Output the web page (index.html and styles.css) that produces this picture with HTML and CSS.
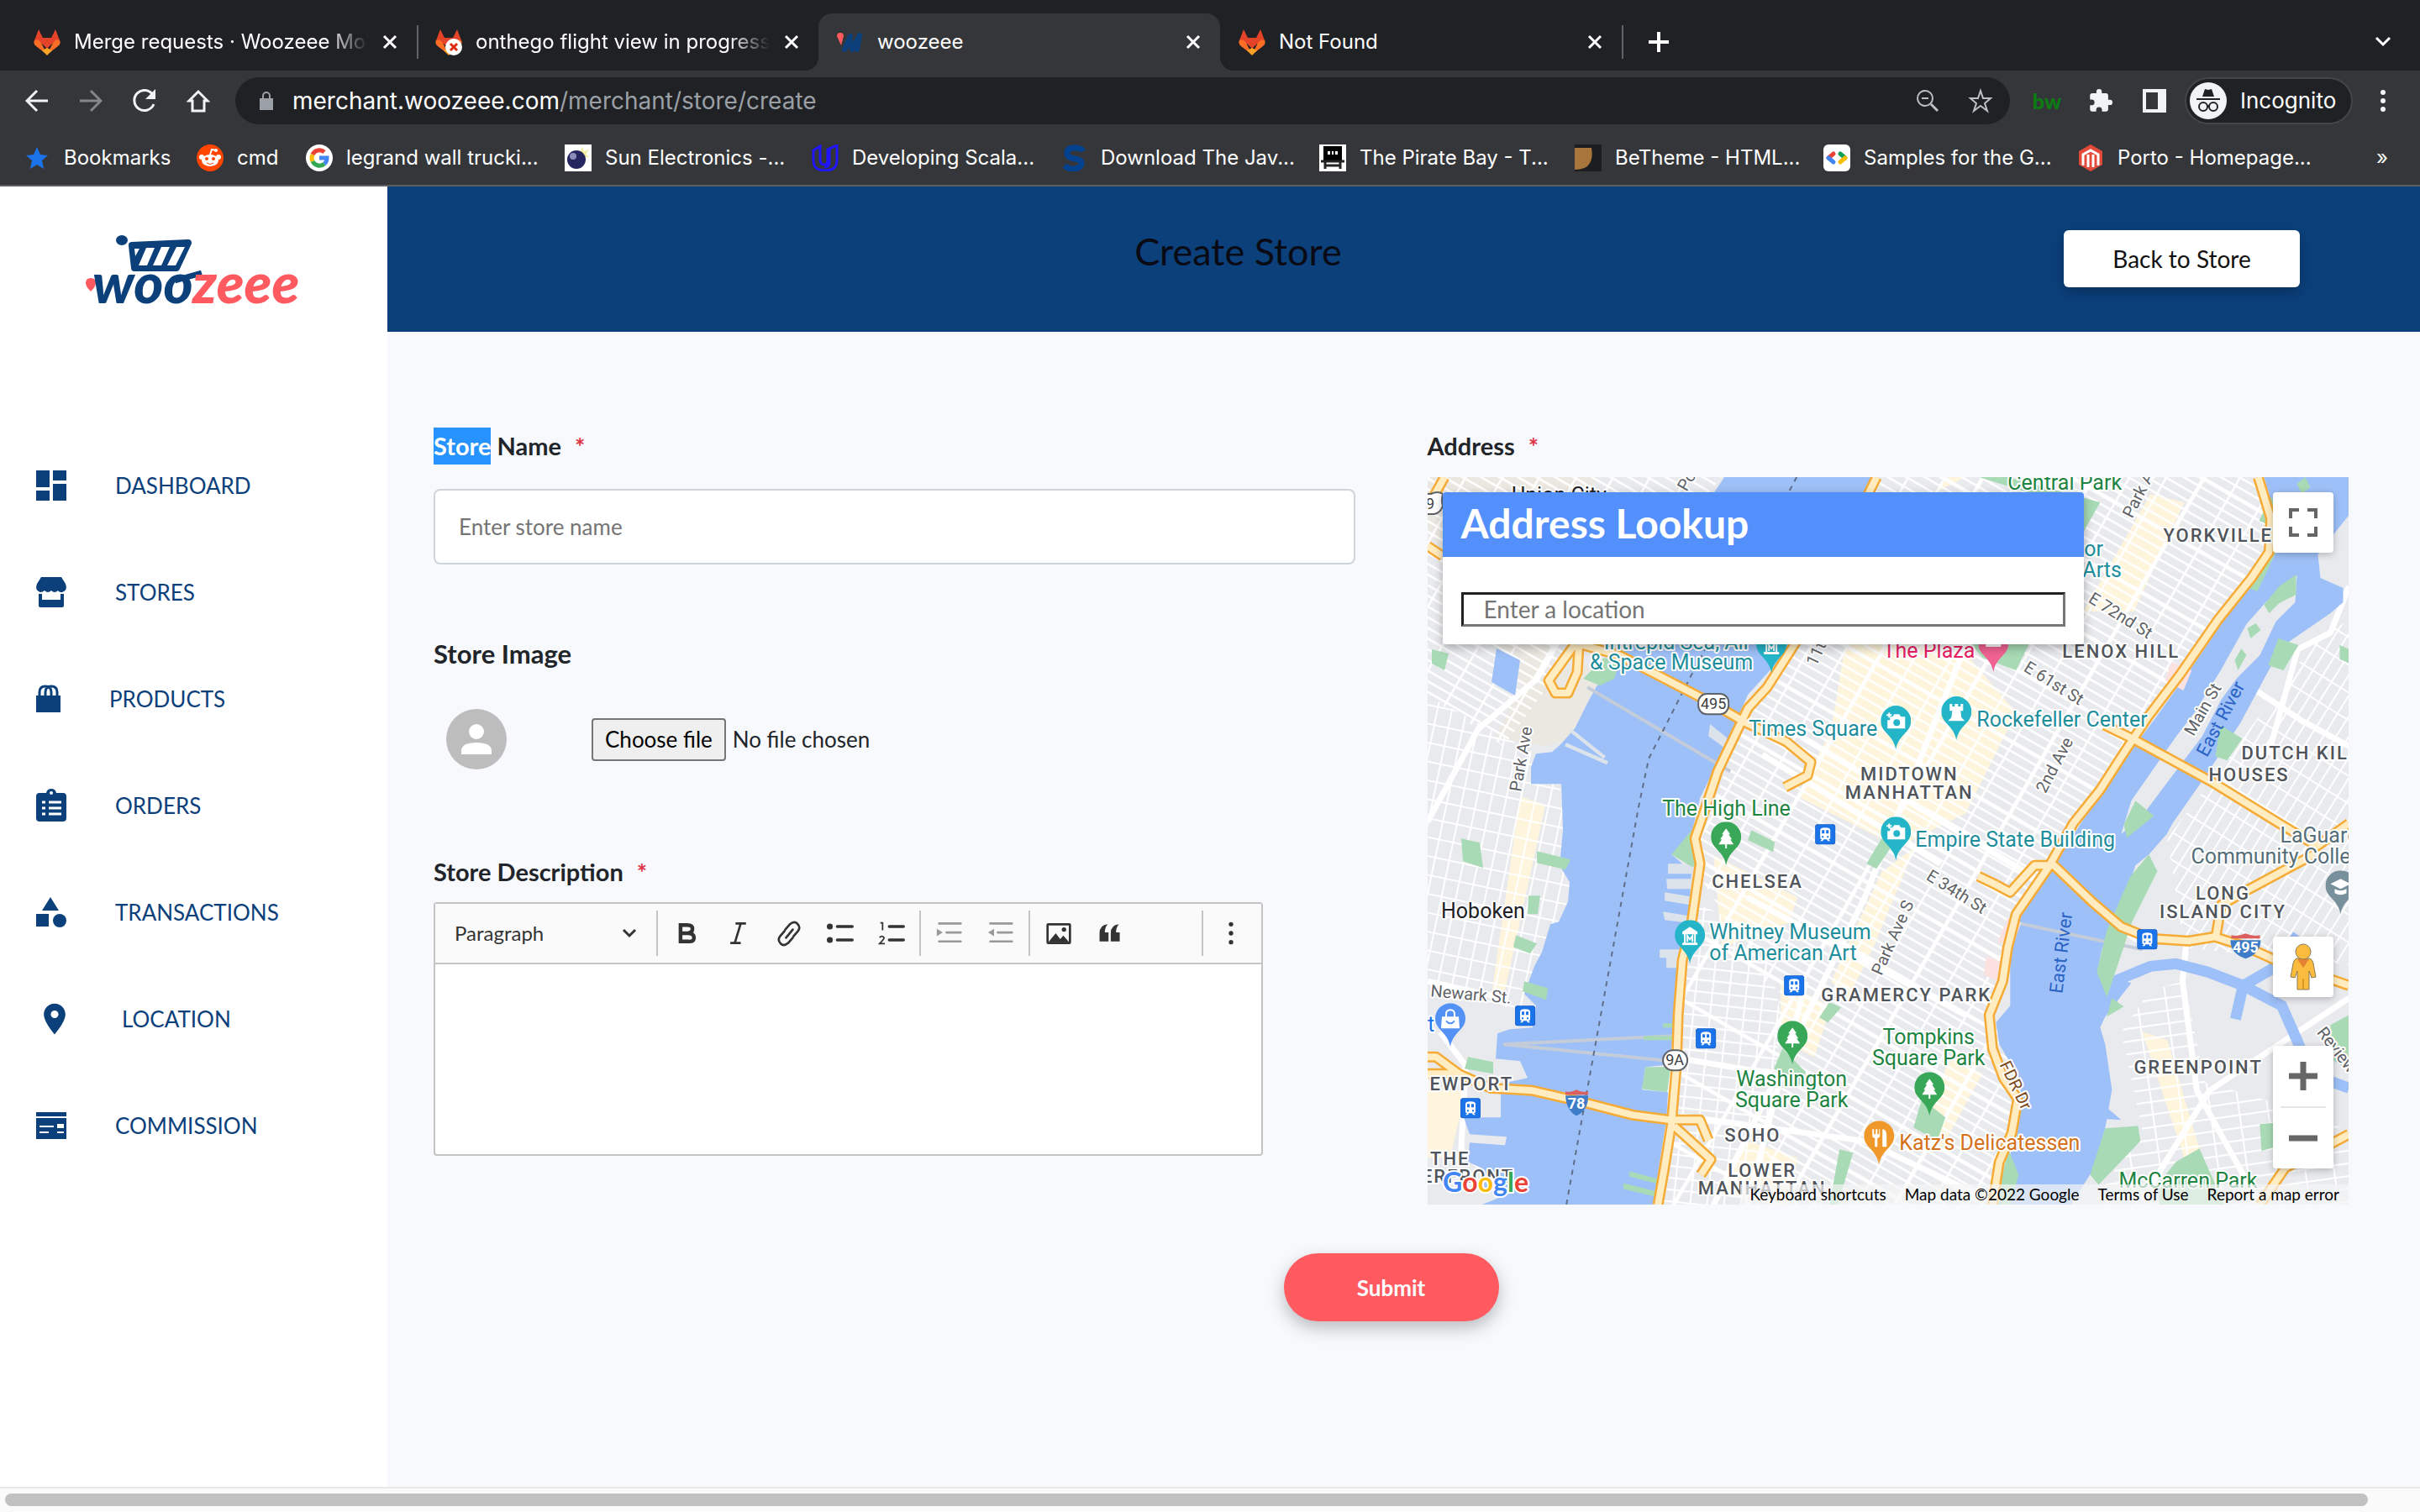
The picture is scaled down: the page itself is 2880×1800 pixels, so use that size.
FILE: index.html
```html
<!DOCTYPE html>
<html lang="en">
<head>
<meta charset="utf-8">
<title>woozeee</title>
<link rel="stylesheet" href="styles.css">
</head>
<body>
<svg class="defs" aria-hidden="true">
  <defs>
    <symbol id="fox" viewBox="0 0 32 32"><path fill="#e24329" d="M6 1 11 11H21L26 1l5 13-2 4H3l-2-4z"/><path fill="#fc6d26" d="M1 14l6-1 9 18L3 21Q-1 18 1 14zM31 14l-6-1-9 18 13-10q4-3 2-7z"/><path fill="#e24329" d="M5 13h22L16 24z"/><path fill="#fca326" d="m16 23 6 3-6 6-6-6z"/></symbol>
    <symbol id="close" viewBox="0 0 20 20"><path d="M3 3 17 17M17 3 3 17" stroke="#fff" stroke-width="3" fill="none"/></symbol>
    <symbol id="pin" viewBox="-18 -52 36 52"><path d="M0 0C-3-18-18-20-18-34a18 18 0 0 1 36 0C18-20 3-18 0 0z"/></symbol>
    <symbol id="train" viewBox="0 0 24 24"><rect width="24" height="24" rx="4" fill="#1a73e8" stroke="#185abc"/><path fill="#fff" d="M6 7q0-3 6-3t6 3v9q0 2-2 2l2 2h-3l-1-2h-4l-1 2H6l2-2q-2 0-2-2z"/><path fill="#1a73e8" d="M8 7h3v4H8zM13 7h3v4h-3zM8 14h2v2H8zM14 14h2v2h-2z"/></symbol>
    <symbol id="camera" viewBox="0 0 24 20"><path fill="#fff" d="M5 5h3l2-3h6l2 3h5v14H2V9h3zM3 0h2v2h2v2H5v2H3V4H1V2h2z"/><circle cx="13" cy="12" r="4" fill="#24b5c9"/></symbol>
    <symbol id="tree" viewBox="0 0 18 24"><path fill="#fff" d="m9 0 5 7h-2l4 6h-2l4 6h-8v5H8v-5H0l4-6H2l4-6H4z"/></symbol>
    <symbol id="museum" viewBox="0 0 20 22"><path fill="#fff" d="m10 0 9 6v3H1V6zM3 9h2v10H3zM15 9h2v10h-2zM1 19h18v3H1z"/><path fill="none" stroke="#fff" stroke-width="2" d="M7 18v-7l3 4 3-4v7"/></symbol>
    <g id="highways" fill="none" stroke-linejoin="round">
      <path d="M534 0 439 195 404 250 381 275 345 350 330 395 318 430 324 460 314 530 303 575 298 640 296 700 290 770 282 820 274 866"/>
      <path d="M182 199 228 212 340 270 378 292 427 315 456 339 452 355 425 369M175 199 144 242 152 257 167 257 178 232 180 200"/>
      <path d="M988 0 1003 49 1001 89 980 120 940 170 895 235 857 285 827 330 800 372 768 412 738 465 700 520 690 560 684 600 668 640 672 680 685 715 702 740 695 780 680 815 672 866"/>
      <path d="M805 295 840 312 932 362 1013 412 1058 439 1096 412"/>
      <path d="M1054 449 974 492 944 509 938 545M676 485 693 494 722 462 745 462 790 505 825 535 860 549 905 552 936 547 974 559 1009 575 1096 605M676 485 655 475"/>
      <path d="M0 690 10 690 37 710 75 727 125 730 190 745 244 759 290 765 324 765 334 789M293 772 337 812 325 830M0 710 37 710M990 866 1020 822 1096 782M20 0 0 36M0 82 18 94"/>
    </g>
    <pattern id="gridM" width="38" height="11" patternUnits="userSpaceOnUse" patternTransform="rotate(30)"><path d="M0 1H38M1 0V11" stroke="#fff" stroke-width="3" fill="none"/></pattern>
    <pattern id="gridWide" width="114" height="77" patternUnits="userSpaceOnUse" patternTransform="rotate(30)"><path d="M0 2H114M2 0V77" stroke="#fff" stroke-width="5" fill="none"/></pattern>
    <pattern id="gridH" width="17" height="22" patternUnits="userSpaceOnUse" patternTransform="rotate(12)"><path d="M0 1H17M1 0V22" stroke="#fff" stroke-width="2" fill="none"/></pattern>
    <pattern id="gridV" width="20" height="14" patternUnits="userSpaceOnUse" patternTransform="rotate(6)"><path d="M0 1H20M1 0V14" stroke="#fff" stroke-width="2" fill="none"/></pattern>
    <pattern id="gridQ" width="13" height="28" patternUnits="userSpaceOnUse" patternTransform="rotate(32)"><path d="M0 1H13M1 0V28" stroke="#fff" stroke-width="2" fill="none"/></pattern>
    <pattern id="gridG" width="34" height="15" patternUnits="userSpaceOnUse" patternTransform="rotate(-8)"><path d="M0 1H34M1 0V15" stroke="#fff" stroke-width="2" fill="none"/></pattern>
  </defs>
</svg>

<header class="chrome">
  <div class="tabs">
    <div class="tab"><svg class="fav"><use href="#fox"/></svg><span class="tab-title fade">Merge requests · Woozeee Mobile</span><button class="x" aria-label="Close tab"><svg width="20" height="20"><use href="#close"/></svg></button></div>
    <div class="tab line"><svg class="fav" viewBox="0 0 32 32"><use href="#fox" width="32" height="32"/><circle cx="22" cy="22" r="10" fill="#fff"/><path d="m18 18 8 8m0-8-8 8" stroke="#dd2b0e" stroke-width="3"/></svg><span class="tab-title fade">onthego flight view in progress</span><button class="x" aria-label="Close tab"><svg width="20" height="20"><use href="#close"/></svg></button></div>
    <div class="tab active"><svg class="fav" viewBox="0 0 32 32"><path d="M0 9q0-4 4-4t4 4L5 20z" fill="#ff5a5f"/><path d="M16 9 9 25l7-11 2 11 9-17-3 17" fill="none" stroke="#0b407b" stroke-width="6" stroke-linecap="round" stroke-linejoin="round"/></svg><span class="tab-title">woozeee</span><button class="x" aria-label="Close tab"><svg width="20" height="20"><use href="#close"/></svg></button></div>
    <div class="tab"><svg class="fav"><use href="#fox"/></svg><span class="tab-title">Not Found</span><button class="x" aria-label="Close tab"><svg width="20" height="20"><use href="#close"/></svg></button></div>
    <button class="new-tab line" aria-label="New tab"><svg width="24" height="24" viewBox="0 0 24 24"><path d="M12 0v24M0 12h24" stroke="#fff" stroke-width="4"/></svg></button>
    <button class="tab-menu" aria-label="Search tabs"><svg width="20" height="14" viewBox="0 0 20 14"><path d="m2 2 8 8 8-8" fill="none" stroke="#fff" stroke-width="3"/></svg></button>
  </div>
  <div class="toolbar">
    <button class="tool" aria-label="Back"><svg viewBox="0 0 28 28"><path d="M27 14H3M14 2 2 14l12 12" fill="none" stroke="#f1f3f4" stroke-width="3"/></svg></button>
    <button class="tool" aria-label="Forward"><svg viewBox="0 0 28 28"><path d="M1 14h24M14 2l12 12-12 12" fill="none" stroke="#85868a" stroke-width="3"/></svg></button>
    <button class="tool" aria-label="Reload"><svg viewBox="0 0 28 28"><path d="M24 7A12 12 0 1 0 25 18" fill="none" stroke="#f1f3f4" stroke-width="3"/><path d="M27 0v12H15z" fill="#f1f3f4"/></svg></button>
    <button class="tool" aria-label="Home"><svg viewBox="0 0 28 28"><path d="M14 3 3 14h4v12h14V14h4z" fill="none" stroke="#f1f3f4" stroke-width="3"/></svg></button>
    <div class="omnibox">
      <svg width="18" height="24" viewBox="0 0 18 24"><path d="M1 9h16v14H1z" fill="#9aa0a6"/><path d="M5 10V6a4 4 0 0 1 8 0v4" fill="none" stroke="#9aa0a6" stroke-width="2"/></svg>
      <span class="url">merchant.woozeee.com<span class="path">/merchant/store/create</span></span>
      <svg width="28" height="28" viewBox="0 0 28 28"><circle cx="11" cy="11" r="9" fill="none" stroke="#bdc1c6" stroke-width="2"/><path d="M7 11h8" stroke="#bdc1c6" stroke-width="2"/><path d="m18 18 8 8" stroke="#bdc1c6" stroke-width="3"/></svg>
      <svg class="star" width="30" height="30" viewBox="0 0 30 30"><path d="m15 3 3 9h9l-7 6 3 9-8-6-8 6 3-9-7-6h9z" fill="none" stroke="#bdc1c6" stroke-width="2"/></svg>
    </div>
    <button class="tool bw">bw</button>
    <button class="tool" aria-label="Extensions"><svg width="30" viewBox="1 1 22 22"><path fill="#f1f3f4" d="M20.5 11H19V7c0-1.100-.9-2-2-2h-4V3.500a2.500 2.500 0 0 0-5 0V5H4c-1.100 0-2 .9-2 2v3.800h1.500a2.700 2.700 0 0 1 0 5.400H2V20c0 1.100.9 2 2 2h3.800v-1.500a2.700 2.700 0 0 1 5.400 0V22H17c1.100 0 2-.9 2-2v-4h1.500a2.500 2.500 0 0 0 0-5z"/></svg></button>
    <button class="tool" aria-label="Side panel"><svg viewBox="0 0 28 28"><path fill="#f1f3f4" fill-rule="evenodd" d="M0 0h28v28H0zM4 4v20h14V4z"/></svg></button>
    <button class="incognito"><svg width="44" height="44" viewBox="0 0 44 44"><circle cx="22" cy="22" r="22" fill="#f1f3f4"/><path fill="#202124" d="m15 17 3-9 4 1 4-1 3 9zM8 19h28v2H8z"/><g fill="none" stroke="#202124" stroke-width="2"><circle cx="16" cy="29" r="5"/><circle cx="28" cy="29" r="5"/><path d="M21 29q1-2 2 0"/></g></svg>Incognito</button>
    <button class="tool" aria-label="Menu"><svg viewBox="0 0 28 28"><g fill="#f1f3f4"><circle cx="14" cy="4" r="3"/><circle cx="14" cy="14" r="3"/><circle cx="14" cy="24" r="3"/></g></svg></button>
  </div>
  <nav class="bookmarks">
    <a href="#"><svg viewBox="0 0 32 32"><path fill="#1a73e8" d="m16 3 4 9 9 1-7 6 2 10-8-5-8 5 2-10-7-6 9-1z"/></svg>Bookmarks</a>
    <a href="#"><svg viewBox="0 0 32 32"><circle cx="16" cy="16" r="16" fill="#ff4500"/><ellipse cx="16" cy="19" rx="10" ry="7" fill="#fff"/><circle cx="6" cy="15" r="3" fill="#fff"/><circle cx="26" cy="15" r="3" fill="#fff"/><path d="m16 12 2-6 5 1" fill="none" stroke="#fff" stroke-width="2"/><circle cx="23" cy="7" r="2" fill="#fff"/><circle cx="12" cy="17" r="2" fill="#ff4500"/><circle cx="20" cy="17" r="2" fill="#ff4500"/><path d="M12 22q4 3 8 0" fill="none" stroke="#ff4500"/></svg>cmd</a>
    <a href="#"><svg viewBox="0 0 32 32"><circle cx="16" cy="16" r="16" fill="#fff"/><g fill="none" stroke-width="5"><path d="M8 12a9 9 0 0 1 14-3" stroke="#ea4335"/><path d="M8 20a9 9 0 0 1 0-8" stroke="#fbbc05"/><path d="M8 20a9 9 0 0 0 14 3" stroke="#34a853"/><path d="M16 16h9q0 5-3 7" stroke="#4285f4"/></g></svg>legrand wall trucki...</a>
    <a href="#"><svg viewBox="0 0 32 32"><path fill="#fff" d="M0 0h32v32H0z"/><path d="m18 12 3-10 2 7 6-4-4 7 5 3-8 0z" fill="#f3ec9b"/><circle cx="14" cy="18" r="11" fill="#25265f"/><circle cx="10" cy="14" r="4" fill="#8b8cba"/></svg>Sun Electronics -...</a>
    <a href="#"><svg viewBox="0 0 32 32"><path d="M2 7 10 2v16q0 6 5 6 4 0 4-5V6l11-5v18q0 12-14 12T2 19z" fill="none" stroke="#2015ff" stroke-width="3"/><path d="M21 6v15q0 6-6 6" fill="none" stroke="#2015ff" stroke-width="3"/></svg>Developing Scala...</a>
    <a href="#"><svg viewBox="0 0 32 32"><path d="M27 8Q25 4 17 4 8 4 8 10t9 7 8 6-8 6T5 25" fill="none" stroke="#04418f" stroke-width="7"/></svg>Download The Jav...</a>
    <a href="#"><svg viewBox="0 0 32 32"><path fill="#fff" d="M0 0h32v32H0z"/><path d="M5 2h22v17H5z"/><path d="M10 8h3v4h-3zM15 8h2v4h-2zM19 8h3v4h-3z" fill="#fff"/><path d="M2 20h28M7 20v9m18-9v9M8 25h16" stroke="#222" stroke-width="3"/></svg>The Pirate Bay - T...</a>
    <a href="#"><svg viewBox="0 0 32 32"><path fill="#1c1d1f" d="M0 0h32v32H0z"/><path fill="#a8753c" d="M0 4h20q2 12-2 18-4 8-18 8z"/></svg>BeTheme - HTML...</a>
    <a href="#"><svg viewBox="0 0 32 32"><rect width="32" height="32" rx="6" fill="#fff"/><g fill="none" stroke-width="5" stroke-linecap="round"><path d="m12 11-6 5" stroke="#ea4335"/><path d="m6 16 6 5" stroke="#4285f4"/><path d="m20 11 6 5" stroke="#0f9d58"/><path d="m26 16-6 5" stroke="#fbbc05"/></g></svg>Samples for the G...</a>
    <a href="#"><svg viewBox="0 0 32 32"><path fill="#e24a39" d="m16 0 14 8v16l-14 8-14-8V8z"/><path d="M7 25V12l9-5 9 5v13M13 27V12m6 15V12" fill="none" stroke="#fff" stroke-width="3"/></svg>Porto - Homepage...</a>
    <button class="more">»</button>
  </nav>
</header>

<div class="page">
  <aside class="sidebar">
    <a class="logo" href="#" aria-label="woozeee"><svg width="258" height="90" viewBox="0 0 258 90">
      <ellipse cx="43" cy="6" rx="7" ry="6" fill="#0b407b"/>
      <path d="M55 12 122 9 108 39H58z" fill="#0b407b" stroke="#0b407b" stroke-width="8" stroke-linejoin="round"/>
      <path d="M58 16h6l-5 9zM72 15h10L73 36H63zM90 14h10L90 36H80zM108 14h10l-11 22H97z" fill="#fff"/>
      <path d="M0 57q0-6 6-6 6 0 6 6 0 4-6 10-6-6-6-10z" fill="#ff5a5f"/>
      <path d="m106 54 32-9" stroke="#0b407b" stroke-width="7"/>
      <text class="wordmark" x="8" y="81" fill="#0b407b">woo<tspan fill="#ff5a5f">zeee</tspan></text>
    </svg></a>
    <nav class="menu">
      <a href="#"><svg width="36" height="36" viewBox="3 3 18 18"><path d="M3 13h8V3H3zM3 21h8v-6H3zM13 21h8V11h-8zM13 3v6h8V3z"/></svg>DASHBOARD</a>
      <a href="#"><svg width="36" height="36" viewBox="0 0 36 36"><path d="M6 0h24l5 8q3 8-4 10-4 0-5-2-4 4-8 0-4 4-8 0-2 2-5 2-7-2-4-10zM3 20h4v7h22v-7h4v14q0 2-2 2H5q-2 0-2-2z"/></svg>STORES</a>
      <a href="#"><svg width="29" height="33" viewBox="0 0 29 33"><path d="M0 13h29v20H0z"/><path d="M4 15V9q0-7 7-7t7 7v6M11 15V9q0-7 7-7t7 7v6" fill="none" stroke="#0b407b" stroke-width="3"/></svg>PRODUCTS</a>
      <a href="#"><svg width="36" height="40" viewBox="0 0 36 40"><path d="M4 5h8q1-5 6-5t6 5h8q4 0 4 4v26q0 4-4 4H4q-4 0-4-4V9q0-4 4-4z"/><circle cx="18" cy="5" r="2" fill="#fff"/><path d="M15 16h15M15 23h15M15 30h15M7 16h4M7 23h4M7 30h4" stroke="#fff" stroke-width="3"/></svg>ORDERS</a>
      <a href="#"><svg width="36" height="36" viewBox="0 0 36 36"><path d="m17 0 10 16H7zM0 20h15v15H0z"/><circle cx="28" cy="28" r="8"/></svg>TRANSACTIONS</a>
      <a href="#"><svg width="44" height="44" viewBox="0 0 24 24"><path fill-rule="evenodd" d="M12 2C8.100 2 5 5.100 5 9c0 5.300 7 13 7 13s7-7.700 7-13c0-3.900-3.100-7-7-7zm0 9.500a2.500 2.500 0 0 1 0-5 2.500 2.500 0 0 1 0 5z"/></svg>LOCATION</a>
      <a href="#"><svg width="36" height="32" viewBox="0 0 36 32"><path d="M0 0h36v5H0zM0 7h36v25H0z"/><path d="M4 17h17M4 24h11M25 24h8" stroke="#fff" stroke-width="2"/><path d="M25 14h8v5h-8z" fill="#fff"/></svg>COMMISSION</a>
    </nav>
  </aside>

  <main class="main">
    <div class="banner"><h1>Create Store</h1><button class="back">Back to Store</button></div>
    <form class="form">
      <div class="columns">
        <div class="col">
          <label class="label" for="store-name"><span><mark>Store</mark> Name</span><span class="req">*</span></label>
          <input class="text" id="store-name" type="text" placeholder="Enter store name">
          <div class="label image-label" id="image-label">Store Image</div>
          <div class="upload">
            <svg width="72" height="72" viewBox="0 0 72 72"><circle cx="36" cy="36" r="36" fill="#bdbdbd"/><circle cx="36" cy="27" r="9" fill="#fff"/><path d="M18 54v-4q0-10 18-10t18 10v4z" fill="#fff"/></svg>
            <input class="file-input" id="store-image" type="file" aria-labelledby="image-label">
            <label class="file-button" for="store-image">Choose file</label><span class="file-name">No file chosen</span>
          </div>
          <label class="label desc-label" for="description"><span>Store Description</span><span class="req">*</span></label>
          <div class="editor">
            <div class="editor-bar">
              <button type="button" class="para">Paragraph<svg width="18" height="12" viewBox="0 0 18 12"><path d="m2 2 7 7 7-7" fill="none" stroke="#333" stroke-width="3"/></svg></button>
              <i></i>
              <button type="button" aria-label="Bold"><svg viewBox="0 0 36 36"><path d="M10 7h9q7 0 7 5t-7 6H10zm0 11h10q8 0 8 6t-8 5H10z" fill="none" stroke="#333" stroke-width="5"/></svg></button>
              <button type="button" aria-label="Italic"><svg viewBox="0 0 36 36"><path d="M15 5h14M8 31h14M22 5l-8 26" fill="none" stroke="#333" stroke-width="3"/></svg></button>
              <button type="button" aria-label="Link"><svg viewBox="0 0 36 36"><g fill="none" stroke="#333" stroke-width="3" stroke-linecap="round"><path d="m13 13 6-7q6-5 10-1 5 5 1 10l-6 7"/><path d="m23 24-6 7q-6 5-10 1-5-5-1-10l6-7M14 24l9-11"/></g></svg></button>
              <button type="button" aria-label="Bulleted list"><svg viewBox="0 0 36 36"><circle cx="4" cy="9" r="4" fill="#333"/><circle cx="4" cy="27" r="4" fill="#333"/><path d="M14 9h20M14 27h20" stroke="#333" stroke-width="4" stroke-linecap="round"/></svg></button>
              <button type="button" aria-label="Numbered list"><svg viewBox="0 0 36 36"><path d="M3 4h3v10M2 24q3-4 6 0 0 2-6 8h7" fill="none" stroke="#333" stroke-width="2"/><path d="M15 9h19M15 27h19" stroke="#333" stroke-width="4" stroke-linecap="round"/></svg></button>
              <i></i>
              <button type="button" disabled aria-label="Increase indent"><svg viewBox="0 0 36 36"><path d="M4 5h29M14 17h19M4 29h29" stroke="#999" stroke-width="3" stroke-linecap="round"/><path d="m1 12 8 5-8 5z" fill="#999"/></svg></button>
              <button type="button" disabled aria-label="Decrease indent"><svg viewBox="0 0 36 36"><path d="M4 5h29M14 17h19M4 29h29" stroke="#999" stroke-width="3" stroke-linecap="round"/><path d="m9 12-8 5 8 5z" fill="#999"/></svg></button>
              <i></i>
              <button type="button" aria-label="Image"><svg viewBox="0 0 36 36"><rect x="3" y="6" width="30" height="25" rx="1" fill="none" stroke="#333" stroke-width="3"/><circle cx="25" cy="13" r="3" fill="#333"/><path d="m4 30 10-12 6 8 4-5 8 9z" fill="#333"/></svg></button>
              <button type="button" aria-label="Quote"><svg viewBox="0 0 36 36"><path d="M4 18q0-11 11-12-4 4-4 11h5v12H4zM19 18q0-11 11-12-4 4-4 11h5v12H19z" fill="#333"/></svg></button>
              <i class="push"></i>
              <button type="button" aria-label="More"><svg viewBox="0 0 36 36"><g fill="#333"><circle cx="18" cy="6" r="3"/><circle cx="18" cy="18" r="3"/><circle cx="18" cy="30" r="3"/></g></svg></button>
            </div>
            <textarea id="description"></textarea>
          </div>
        </div>
        <div class="col">
          <label class="label" for="location"><span>Address</span><span class="req">*</span></label>
          <div class="map">
            <svg class="map-art" viewBox="0 0 1096 866" preserveAspectRatio="xMinYMin slice">
              <rect width="1096" height="866" fill="#e8eaed"/>
              <g fill="#ebe8e1"><path d="M0 0H200L150 190 120 260 0 60zM150 230 228 215 175 310 140 320 80 310 100 270z"/></g>
              <g fill="#fef5dc"><path d="M500 180 640 210 700 280 640 400 560 440 440 380 480 300zM620 0 640 0 600 20zM860 20l40 10-60 130-60 0zM340 450 440 500 430 530 350 560zM580 440 530 560 500 620 480 600 540 470zM420 600l60 30-20 60-40-20zM110 380l30 10-50 230-14-4zM0 730h45l-18 80H0zM850 660l30 10 50 170-20 0zM380 790l60 20-10 60-80-20zM620 690l40 20-50 90-20-10z"/></g>
              <path d="M540 0h460v90L770 412 700 540 670 640 400 600 315 460 380 275 440 190z" fill="url(#gridM)"/>
              <path d="M540 0h460v90L770 412 700 540 670 640 710 740 680 866H270L300 560 315 460 380 275 440 190z" fill="url(#gridWide)"/>
              <path d="M300 500 400 540 420 640 400 866H260z" fill="url(#gridV)"/>
              <path d="M420 600 670 640 710 740 680 866H400z" fill="url(#gridM)"/>
              <path d="M0 260 130 330 170 390V560L120 640 0 600z" fill="url(#gridH)"/>
              <path d="M0 0H350L180 200 90 320 0 260z" fill="url(#gridM)"/>
              <path d="M1096 170 1060 190 880 430 900 560 1096 580z" fill="url(#gridQ)"/>
              <path d="M825 660 860 610 900 600 925 720 1060 760 1096 780V866H790l60-90z" fill="url(#gridG)"/>
              <g fill="none" stroke="#fff" stroke-width="7" stroke-linejoin="round"><path d="M0 410 60 300 130 240 180 150M0 600 90 620M110 866 40 800 45 700 15 660M903 550 898 600 915 730 990 866M963 239 1040 290 1096 320M1096 130 1074 185 1035 205 1000 330M850 860l80-130 60-40 106-70"/><path d="M398 330 610 460M430 300 860 560M300 760 520 790 680 866M380 500 640 640M450 600 380 866M340 866 520 500 640 200M290 690l120 20"/></g>
              <g fill="#9ec0f8">
                <path d="M353 0 341 18 240 199 201 249 190 269 175 299 159 317 148 327 129 329 123 345V365L159 365 161 420 157 462 169 482 167 505 156 529 146 532 136 565 127 582 115 615 129 629 125 655 98 657 83 662 81 692 110 695 119 715 87 722V762H43L50 782 94 785 92 795 50 792 48 815 64 822V849L98 852 64 866H268L274 829 284 765 286 732 255 729 259 702 289 699 295 599 301 572 311 515 314 469 290 449 312 432 324 382 353 322 381 259 439 195 534 0z"/>
                <path d="M995 0 1009 49 1007 89 951 165 905 232 867 285 837 325 777 412 745 462 706 522 693 569V629L676 649 680 675 706 719 705 759 691 815 687 866H765L791 825 806 775 808 764 825 765 810 752 814 729 806 675 800 655 806 642 837 602 817 595 798 582 802 562 825 515 842 462 858 449 879 425 886 412 921 362 967 292 1001 229 1020 199 1074 162 1089 149V132L1062 120 1059 92 1096 45V0z"/>
                <path d="m82 204 28 14-6 42-28-16z"/>
              </g>
              <path d="M817 600 860 582 890 579 928 589 970 605 1016 629 1035 672 1050 710 1096 727M970 605 961 645M970 605 1005 585 1035 545" fill="none" stroke="#9ec0f8" stroke-width="13"/>
              <path d="M1034 117 1032 149 1009 172 990 212 963 239 944 265 921 309 898 339 856 395 825 425 837 385 890 309 913 279 944 229 974 175 997 149z" fill="#e8eaed"/>
              <g fill="#dde3ea"><path d="M286 460h35v12h-35zM284 478h35v12h-34zM282 494l36 6v10l-36-6zM280 517l36 6v8l-34-4zM276 562h26v22h-18v-12h-8zM336 294l20 16v14l-22-16zM165 316l50 22-2 4-50-22zM172 300l40 32-3 3-40-32z"/></g>
              <path d="M190 250 360 350M90 675 291 665M90 675l200 20M690 528l160 34" fill="none" stroke="#c3ccd8" stroke-width="4"/>
              <g fill="#a8dab5">
                <path d="M656 0 690 0 800 30 783 60 700 230 660 215 640 190 720 20zM185 240 210 215 228 219 222 240 205 248zM5 205l20 5-5 20-15-8zM290 449l25-30 8 40-8 5zM259 702h30l-4 30-30-4zM257 665h34v5h-34zM280 650h14v5h-14zM240 826l34 9v6l-34-9zM233 840l40 10-2 6-38-9zM40 430l22 5 4 30-24-8zM115 600l28 8-2 14-28-10zM130 445l40 10-6 12-34-8zM105 545l25 10-8 12-20-8zM120 498h14l-3 22h-12zM48 690l30 6v14l-34-6zM385 420l28 14-2 12-30-14zM540 430l14 6-20 30-12-6zM422 680l28 28-8 16-30-20zM588 740l28 22-10 28-28-16zM478 625l14 6-16 18-10-6zM490 800l16 4-18 62h-10zM836 475l22-26 10 20-30 60-30 90-12-30 12-50zM842 385l22 18-32 26-4-15zM943 295l26 16-18 26-14-5zM1012 192l24 8-18 30-18-6zM1013 130l20-14v24l-20 10-12 12-6-10zM975 180l10-6 6 8-12 10zM960 218l8-14 6 8-10 18zM1003 24l20 10-14 26-20-8zM1034 8l10-8 6 12-10 8zM995 85l14 5-22 46-10-4zM806 775 845 772 848 790 798 842 788 830zM870 840l20-25 28-16 30 67h-78zM1096 640l-22 12v40l22 14zM990 770l22-2v28l-20 6zM1085 200l11 5v16l-11-4zM691 800l12 30-10 36h-18zM814 620l14 10-20 12z"/>
              </g>
              <path d="M690 525l16 5-10 28-18-5zM665 570l24 10-6 22-22-10zM885 220l24 10-10 24-22-12z" fill="#fce1e1"/>
              <path d="M439 0 314 235 263 335 251 392 165 866" fill="none" stroke="#5f6f8a" stroke-width="2" stroke-dasharray="6 6"/>
              <use href="#highways" stroke="#f5ab35" stroke-width="13"/>
              <use href="#highways" stroke="#ffecc0" stroke-width="8"/>
              <g class="streets">
                <text transform="translate(838 50)rotate(-63)">Park Ave</text><text transform="translate(785 148)rotate(32)">E 72nd St</text><text transform="translate(708 230)rotate(32)">E 61st St</text><text transform="translate(735 377)rotate(-62)">2nd Ave</text><text transform="translate(592 478)rotate(32)">E 34th St</text><text transform="translate(540 594)rotate(-66)">Park Ave S</text><text transform="translate(111 375)rotate(-80)">Park Ave</text><text transform="translate(911 309)rotate(-60)">Main St</text><text transform="translate(462 226)rotate(-65)">11th Ave</text><text transform="translate(308 18)rotate(-60)">Port</text><text transform="translate(1057 661)rotate(52)">Review Ave</text><text transform="translate(3 618)rotate(5)">Newark St.</text>
                <text fill="#7b4a1d" transform="translate(680 699)rotate(64)">FDR Dr</text>
              </g>
              <g class="river"><text transform="translate(927 334)rotate(-62)">East River</text><text transform="translate(755 615)rotate(-83)">East River</text></g>
              <g class="area">
                <text x="875" y="77">YORKVILLE</text><text x="755" y="215">LENOX HILL</text><text x="573" y="361" class="mid">MIDTOWN</text><text x="573" y="383" class="mid">MANHATTAN</text><text x="338" y="489">CHELSEA</text><text x="468" y="624">GRAMERCY PARK</text><text x="353" y="791">SOHO</text><text x="398" y="833" class="mid">LOWER</text><text x="398" y="854" class="mid">MANHATTAN</text><text x="102" y="730" class="end">NEWPORT</text><text x="3" y="819">THE</text><text x="103" y="840" class="end">WATERFRONT</text><text x="946" y="503" class="mid">LONG</text><text x="946" y="525" class="mid">ISLAND CITY</text><text x="968" y="336">DUTCH KILLS</text><text x="929" y="362">HOUSES</text><text x="840" y="710">GREENPOINT</text>
              </g>
              <g class="poi">
                <g fill="#1e8e9c"><text x="781" y="94">or</text><text x="779" y="119">Arts</text><text x="535" y="308" class="end">Times Square</text><text x="653" y="297">Rockefeller Center</text><text x="580" y="440">Empire State Building</text><text x="335" y="550">Whitney Museum</text><text x="335" y="575">of American Art</text><text x="384" y="205" class="end">Intrepid Sea, Air</text><text x="387" y="229" class="end">&amp; Space Museum</text></g>
                <g fill="#1e8442"><text x="690" y="15">Central Park</text><text x="279" y="403">The High Line</text><text x="433" y="725" class="mid">Washington</text><text x="433" y="750" class="mid">Square Park</text><text x="596" y="675" class="mid">Tompkins</text><text x="596" y="700" class="mid">Square Park</text><text x="822" y="846">McCarren Park</text></g>
                <text x="651" y="215" class="end" fill="#e91e63">The Plaza</text><text x="561" y="801" fill="#d5711b">Katz's Delicatessen</text><text x="16" y="525" fill="#202124">Hoboken</text><text x="100" y="30" fill="#202124">Union City</text><text x="0" y="660" fill="#1a73e8">t</text>
                <g fill="#546e7a"><text x="1014" y="435">LaGuardia</text><text x="908" y="460">Community College</text></g>
              </g>
              <g>
                <g fill="#24b5c9"><use href="#pin" x="539" y="272" width="36" height="52"/><use href="#pin" x="611" y="261" width="36" height="52"/><use href="#pin" x="539" y="404" width="36" height="52"/><use href="#pin" x="294" y="527" width="36" height="52"/><use href="#pin" x="391" y="181" width="36" height="52"/></g>
                <g fill="#38a757"><use href="#pin" x="337" y="410" width="36" height="52"/><use href="#pin" x="416" y="647" width="36" height="52"/><use href="#pin" x="579" y="708" width="36" height="52"/></g>
                <use href="#pin" x="519" y="766" width="36" height="52" fill="#f0982a"/><use href="#pin" x="9" y="626" width="36" height="52" fill="#5491f5"/><use href="#pin" x="1068" y="468" width="36" height="52" fill="#78909c"/><use href="#pin" x="655" y="180" width="36" height="52" fill="#f06292"/>
              </g>
              <use href="#camera" x="545" y="280" width="24" height="20"/><use href="#camera" x="545" y="412" width="24" height="20"/><use href="#tree" x="346" y="418" width="18" height="24"/><use href="#tree" x="425" y="655" width="18" height="24"/><use href="#tree" x="588" y="716" width="18" height="24"/><use href="#museum" x="302" y="535" width="20" height="22"/><use href="#museum" x="399" y="189" width="20" height="22"/>
              <g fill="#fff"><path d="M621 270h3v3h3v-3h4v3h3v-3h3v8h-3l1 8 4 4H619l4-4 1-8h-3zM529 776h2v6h2v-6h2v6h2v-6h1v9l-3 2v10h-3v-10l-3-2zM541 797v-21q5 0 5 8v13zM17 642h20l1 14H16z"/><path d="m1086 478 12 6-12 6-12-6zM1079 490q7 4 14 0v5q-7 4-14 0zM664 196h18v6h-18z"/></g><path d="M22 643v-4q0-5 5-5t5 5v4" fill="none" stroke="#fff" stroke-width="2"/><path d="M22 647q5 6 10 0" fill="none" stroke="#5491f5" stroke-width="2"/>
              <use href="#train" x="461" y="413" width="24" height="24"/><use href="#train" x="424" y="593" width="24" height="24"/><use href="#train" x="319" y="656" width="24" height="24"/><use href="#train" x="104" y="629" width="24" height="24"/><use href="#train" x="39" y="739" width="24" height="24"/><use href="#train" x="844" y="538" width="24" height="24"/>
              <g fill="#fff" stroke="#5f6368" stroke-width="2"><rect x="322" y="258" width="36" height="24" rx="10"/><rect x="280" y="682" width="29" height="24" rx="12"/><path d="M-10 20h14q8-4 14 0-2 8 0 14-2 8-10 10h-18z"/></g>
              <g><path d="M164 736h27q0 18-14 24-12-6-13-24z" fill="#3f7cc8"/><path d="M164 735v-4q6 2 13-2 7 4 14 2v4z" fill="#db5f5f"/><path d="M955 551h36q0 16-18 22-18-6-18-22z" fill="#3f7cc8"/><path d="M956 549v-4q8 2 17-2 9 4 17 2v4z" fill="#db5f5f"/></g>
              <g class="num"><text x="340" y="276">495</text><text x="294" y="700">9A</text><text x="3" y="38">9</text><text x="177" y="752" class="inv">78</text><text x="973" y="566" class="inv">495</text></g>
              <text class="google" x="18" y="851"><tspan fill="#4285f4">G</tspan><tspan fill="#ea4335">o</tspan><tspan fill="#fbbc05">o</tspan><tspan fill="#4285f4">g</tspan><tspan fill="#34a853">l</tspan><tspan fill="#ea4335">e</tspan></text>
            </svg>
            <div class="lookup"><h2>Address Lookup</h2><div class="lookup-body"><input id="location" type="text" placeholder="Enter a location"></div></div>
            <button type="button" class="ctl full" aria-label="Toggle fullscreen"><svg width="34" height="34" viewBox="0 0 34 34"><path d="M2 12V2h10M22 2h10v10M32 22v10H22M12 32H2V22" fill="none" stroke="#666" stroke-width="4"/></svg></button>
            <div class="corner">
              <button type="button" class="ctl" aria-label="Street View"><svg width="32" height="56" viewBox="0 0 32 56"><path d="M8 18h16q3 1 4 6l3 16-5 1-3-8v22H9V33l-3 8-5-1 3-16q1-5 4-6z" fill="#fbbc3d" stroke="#8a7a55"/><circle cx="16" cy="10" r="9" fill="#fbbc3d" stroke="#8a7a55"/><path d="M9 19h14l-7 10z" fill="#e58133"/><path d="M16 42v12" stroke="#d99a25" stroke-width="2"/></svg></button>
              <div class="zoom"><button type="button" class="ctl" aria-label="Zoom in"><svg width="34" height="34" viewBox="0 0 34 34"><path d="M0 17h34M17 0v34" stroke="#666" stroke-width="7"/></svg></button><hr><button type="button" class="ctl" aria-label="Zoom out"><svg width="34" height="34" viewBox="0 0 34 34"><path d="M0 17h34" stroke="#666" stroke-width="7"/></svg></button></div>
            </div>
            <div class="credits"><button type="button">Keyboard shortcuts</button><span>Map data ©2022 Google</span><a href="#">Terms of Use</a><a href="#">Report a map error</a></div>
          </div>
        </div>
      </div>
      <button class="submit" type="submit">Submit</button>
    </form>
  </main>
</div>
<div class="scroll"><div class="thumb"></div></div>
</body>
</html>
```
FILE: styles.css
```css
* { box-sizing: border-box; }
body { margin: 0; min-height: 100vh; display: flex; flex-direction: column; background: #f7f9fd; color: #212529; font: 26px/36px Lato, "Open Sans", sans-serif; }
button, input, textarea { font: inherit; color: inherit; }
button { border: 0; padding: 0; background: none; display: flex; align-items: center; justify-content: center; }
a { color: inherit; text-decoration: none; }
svg { display: block; flex: none; }
.defs { position: absolute; width: 0; height: 0; }

/* Browser frame */
.chrome { background: #35363a; color: #fff; font: 24px/32px Inter, sans-serif; border-bottom: 2px solid #5f5e62; }
.tabs { display: flex; height: 84px; padding: 16px 32px 0 18px; background: #202124; }
.tab { width: 478px; display: flex; align-items: center; gap: 16px; padding: 0 22px; position: relative; }
.tab.active { background: #35363a; border-radius: 16px 16px 0 0; }
.tab.active::before, .tab.active::after { content: ""; position: absolute; bottom: 0; width: 16px; height: 16px; }
.tab.active::before { left: -16px; background: radial-gradient(circle at 0 0, #202124 16px, #35363a 16px); }
.tab.active::after { right: -16px; background: radial-gradient(circle at 100% 0, #202124 16px, #35363a 16px); }
.line::before { content: ""; position: absolute; left: 0; top: 14px; height: 40px; width: 2px; background: #5f6368; }
.fav { width: 32px; height: 32px; }
.tab-title { flex: 1; min-width: 0; overflow: hidden; white-space: nowrap; }
.fade { -webkit-mask-image: linear-gradient(90deg, #000 86%, transparent); mask-image: linear-gradient(90deg, #000 86%, transparent); }
.new-tab { width: 88px; position: relative; }
.tab-menu { margin-left: auto; width: 24px; }
.toolbar { display: flex; align-items: center; height: 72px; padding: 0 12px; }
.tool { width: 64px; height: 56px; }
.tool svg { width: 28px; height: 28px; }
.omnibox { flex: 1; display: flex; align-items: center; height: 56px; margin: 0 12px; padding: 0 20px 0 28px; border-radius: 28px; background: #202124; font-size: 28px; }
.url { flex: 1; padding-left: 22px; }
.path { color: #9aa0a6; }
.star { margin-left: 34px; }
.bw { color: #0b7d12; font: 900 25px/32px Lato, sans-serif; }
.incognito { width: 200px; height: 56px; gap: 16px; justify-content: flex-start; padding-left: 4px; margin: 0 4px; border: 2px solid #45464a; border-radius: 28px; background: #202124; font-size: 26px; }
.bookmarks { display: grid; grid-template-columns: 206px 130px 308px 294px 296px 308px 304px 296px 302px 1fr auto; align-items: center; height: 64px; padding: 0 38px 0 28px; }
.bookmarks a { display: flex; align-items: center; gap: 16px; white-space: nowrap; }
.bookmarks svg { width: 32px; height: 32px; }

/* Merchant page */
.page { flex: 1; display: flex; }
.sidebar { width: 461px; background: #fff; color: #0b407b; }
.logo { display: block; padding: 58px 0 0 102px; }
.logo svg { overflow: visible; }
.wordmark { font: italic 900 67px Lato, sans-serif; }
.menu { padding-top: 144px; }
.menu a { display: flex; align-items: center; gap: 58px; height: 127px; padding-left: 43px; font-size: 26px; fill: #0b407b; }
.main { flex: 1; min-width: 0; }
.banner { display: flex; align-items: flex-start; height: 173px; padding: 52px 143px 0 30px; background: #0b407b; }
.banner h1 { flex: 1; margin: 0; text-align: center; font-weight: 400; font-size: 45px; line-height: 50px; color: #0a0a14; }
.back { width: 281px; height: 68px; border-radius: 6px; background: #fff; color: #111; font-size: 28px; box-shadow: 0 6px 16px rgba(0,0,0,.25); }
.form { padding: 114px 85px 0 55px; }
.columns { display: grid; grid-template-columns: 1fr 1fr; gap: 86px; }
.label { display: flex; gap: 16px; line-height: 44px; font-size: 29px; font-weight: 700; }
.label mark { background: #2693ff; color: #fff; display: inline-block; }
.req { color: #dc3545; }
.text { display: block; width: 100%; height: 90px; margin-top: 29px; padding: 0 28px; border: 2px solid #ced4da; border-radius: 8px; background: #fff; }
input::placeholder { color: #757575; }
.image-label { margin-top: 84px; font-size: 31px; }
.upload { display: flex; align-items: center; margin-top: 44px; padding-left: 15px; font-size: 26px; }
.file-input { position: absolute; opacity: 0; width: 1px; height: 1px; }
.file-button { margin: 0 8px 0 101px; padding: 5px 14px 6px; border: 2px solid #767676; border-radius: 4px; background: #efefef; color: #000; }
.desc-label { margin-top: 100px; }
.editor { width: 90%; margin-top: 14px; border: 2px solid #c4c4c4; border-radius: 4px; background: #fff; }
.editor-bar { display: flex; align-items: center; height: 72px; padding: 0 5px; border-bottom: 2px solid #c4c4c4; background: #fafafa; color: #333; }
.editor-bar button { width: 61px; height: 56px; }
.editor-bar button svg { width: 32px; height: 32px; }
.editor-bar .para { width: 255px; padding: 0 20px 0 18px; justify-content: space-between; font-size: 24px; }
.editor-bar .para svg { width: 18px; height: 12px; }
.editor-bar i { width: 2px; height: 54px; margin: 0 3px; background: #c4c4c4; }
.editor-bar .push { margin-left: auto; }
.editor textarea { display: block; width: 100%; height: 226px; border: 0; padding: 16px; background: none; resize: none; }
.submit { width: 256px; height: 81px; margin: 58px auto 0; border-radius: 41px; background: #ff5a5f; color: #fff; font-weight: 700; box-shadow: 0 8px 20px rgba(0,0,0,.25); }

/* Map */
.map { position: relative; height: 866px; margin-top: 15px; overflow: hidden; }
.map-art { width: 100%; height: 100%; font-family: Roboto, sans-serif; }
.map-art text { paint-order: stroke; stroke: #fff; stroke-width: 4px; stroke-linejoin: round; }
.mid { text-anchor: middle; }
.end { text-anchor: end; }
.poi { font-size: 25px; }
.area { font-size: 22px; font-weight: 500; fill: #50555b; letter-spacing: 2px; }
.streets { font-size: 20px; fill: #5f6368; }
.map-art .river text { font-size: 22px; fill: #2a63c4; stroke: none; }
.map-art .num text { font-size: 18px; fill: #3c4043; text-anchor: middle; stroke: none; }
.map-art .num .inv { fill: #fff; font-weight: 700; }
.google { font: 700 32px Lato, sans-serif; }
.lookup { position: absolute; left: 18px; top: 18px; width: 763px; border-radius: 4px; background: #fff; overflow: hidden; box-shadow: 0 4px 12px rgba(0,0,0,.3); }
.lookup h2 { margin: 0; padding: 0 22px 3px; line-height: 74px; font-size: 48px; font-weight: 700; background: #5390fb; color: #fff; }
.lookup-body { padding: 42px 22px 21px; }
.lookup input { display: block; width: 100%; height: 41px; padding: 0 24px 2px; border: 3px inset #767676; background: #fff; font-size: 28px; }
.ctl { width: 72px; height: 72px; border-radius: 4px; background: #fff; box-shadow: 0 2px 8px rgba(0,0,0,.25); }
.full { position: absolute; right: 18px; top: 18px; }
.corner { position: absolute; right: 18px; bottom: 43px; display: grid; gap: 58px; }
.zoom { border-radius: 4px; background: #fff; box-shadow: 0 2px 8px rgba(0,0,0,.25); }
.zoom .ctl { box-shadow: none; }
.zoom hr { margin: 0 9px; border: 0; height: 2px; background: #e6e6e6; }
.credits { position: absolute; right: 0; bottom: 0; display: flex; gap: 22px; padding: 0 11px; line-height: 24px; font-size: 19px; color: #000; background: rgba(245,245,245,.7); }

.scroll { height: 30px; padding: 6px 62px 7px 6px; border-top: 2px solid #e8e8e8; background: #fafafa; }
.thumb { height: 15px; border-radius: 8px; background: #c1c1c1; }
```
